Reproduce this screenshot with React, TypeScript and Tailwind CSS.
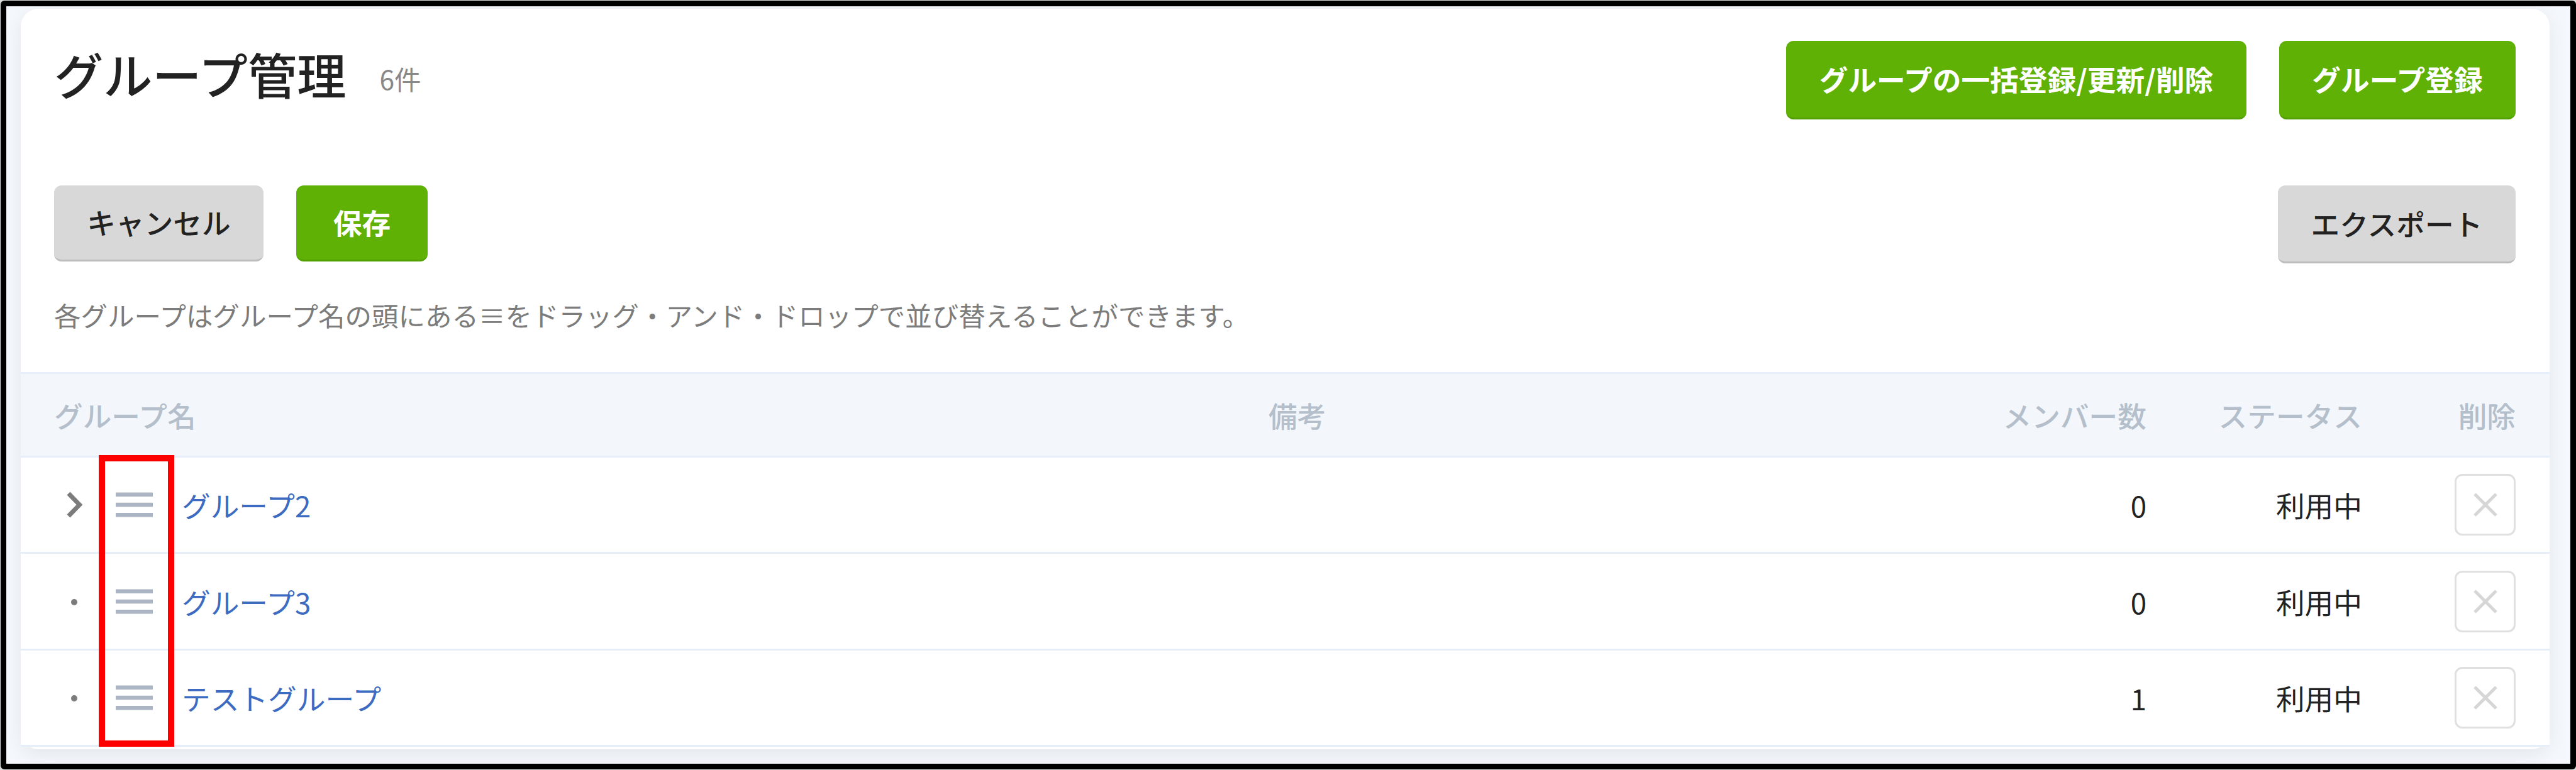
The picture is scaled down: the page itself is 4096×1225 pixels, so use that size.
import React from 'react';
import clsx from 'clsx';

interface Group {
  name: string;
  members: number;
  status: string;
  hasChildren: boolean;
}

const GROUPS: Group[] = [
  { name: 'グループ2', members: 0, status: '利用中', hasChildren: true },
  { name: 'グループ3', members: 0, status: '利用中', hasChildren: false },
  { name: 'テストグループ', members: 1, status: '利用中', hasChildren: false },
];

const COLUMNS = 'grid grid-cols-[1931px_1fr_300px_343px_244px] items-center pl-[53px] pr-[54px]';

interface ButtonProps {
  variant: 'primary' | 'default';
  className?: string;
  children: React.ReactNode;
}

function Button({ variant, className, children }: ButtonProps) {
  return (
    <button
      className={clsx(
        'flex shrink-0 items-center justify-center rounded-[12px] border-b-[3px] text-[45.7px] leading-none whitespace-nowrap',
        variant === 'primary'
          ? 'border-[#54a103] bg-[#5fb106] font-bold text-white'
          : 'border-[#bcbcbc] bg-[#d8d8d8] font-medium text-[#222222]',
        className
      )}
    >
      {children}
    </button>
  );
}

function DragHandle() {
  return (
    <svg width="59" height="40" viewBox="0 0 59 40" fill="#abb5c3">
      <rect y="0.5" width="59" height="6.5" />
      <rect y="16.75" width="59" height="6.5" />
      <rect y="33" width="59" height="6.5" />
    </svg>
  );
}

function GroupRow({ group }: { group: Group }) {
  return (
    <div className={`${COLUMNS} h-[153.4px] border-b-[3px] border-[#e6eefa] bg-white text-[45.7px] leading-none text-[#222222]`}>
      <div className="flex items-center">
        <div className="flex w-[98px] items-center pl-[20px]">
          {group.hasChildren ? (
            <svg width="27" height="42" viewBox="0 0 27 42" fill="none" stroke="#7c7c7c" strokeWidth="7">
              <path d="M3 3 L20.5 21 L3 39" />
            </svg>
          ) : (
            <span className="mt-[3px] ml-[7px] size-[10px] rounded-full bg-[#7c7c7c]" />
          )}
        </div>
        <DragHandle />
        <a className="ml-[46px] pt-[2px] text-[#3c6bc1]">{group.name}</a>
      </div>
      <div />
      <div className="pt-[2px] text-right">{group.members}</div>
      <div className="pt-[2px] text-right">{group.status}</div>
      <div className="flex justify-end">
        <button className="flex h-[98px] w-[97px] items-center justify-center rounded-[12px] border-[3px] border-[#e0e0e0]">
          <svg width="40" height="40" viewBox="0 0 40 40" fill="none" stroke="#d6d6d6" strokeWidth="5">
            <path d="M3 3 L37 37 M37 3 L3 37" />
          </svg>
        </button>
      </div>
    </div>
  );
}

export default function App() {
  return (
    <div className="h-[1225px] w-[4096px] overflow-hidden bg-[#d9dddd] pt-px pl-px font-['Noto_Sans_CJK_JP',sans-serif]">
      <div className="relative h-[1223px] w-[4095px] overflow-hidden rounded-[6px] border-[9px] border-black bg-[#f4f8fd] pt-[4px] pl-[23px]">
        <main className="h-[1178px] w-[4021px] rounded-[28px] bg-white shadow-[0_8px_30px_rgba(20,20,20,0.07)]">
          <header className="flex h-[281px] items-start justify-between pr-[54px] pl-[53px]">
            <div className="flex pt-[64px] leading-none">
              <h1 className="text-[78.2px] font-medium text-[#222222]">グループ管理</h1>
              <span className="mt-[26px] ml-[53px] text-[42.5px] text-[#888888]">6件</span>
            </div>
            <div className="flex gap-[52px] pt-[51px]">
              <Button variant="primary" className="h-[125px] w-[732px]">グループの一括登録/更新/削除</Button>
              <Button variant="primary" className="h-[125px] w-[376px]">グループ登録</Button>
            </div>
          </header>

          <div className="flex h-[185px] items-start justify-between pr-[54px] pl-[53px]">
            <div className="flex gap-[52px]">
              <Button variant="default" className="h-[121px] w-[333px]">キャンセル</Button>
              <Button variant="primary" className="h-[121px] w-[209px]">保存</Button>
            </div>
            <Button variant="default" className="h-[124px] w-[378px]">エクスポート</Button>
          </div>

          <p className="h-[112px] pl-[53px] text-[42.5px] leading-none text-[#7c7c7c]">
            各グループはグループ名の頭にある≡をドラッグ・アンド・ドロップで並び替えることができます。
          </p>

          <div className={`${COLUMNS} h-[136px] border-y-[3px] border-[#e6eefa] bg-[#f3f7fb] pt-[1px] text-[45.7px] leading-none font-medium text-[#b4bfcb]`}>
            <div>グループ名</div>
            <div>備考</div>
            <div className="text-right">メンバー数</div>
            <div className="text-right">ステータス</div>
            <div className="text-right">削除</div>
          </div>

          {GROUPS.map((group) => (
            <GroupRow key={group.name} group={group} />
          ))}
        </main>

        {/* highlight around the drag handles */}
        <div className="absolute top-[714px] left-[147px] h-[464px] w-[120px] border-[10px] border-[#ff0000]" />
      </div>
    </div>
  );
}
